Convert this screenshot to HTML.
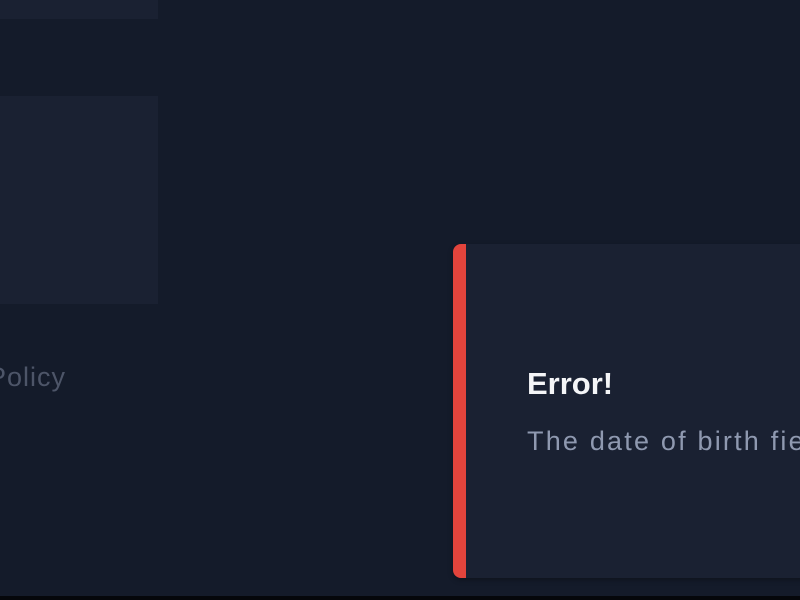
<!DOCTYPE html>
<html><head><style>
html,body{margin:0;padding:0;width:800px;height:600px;overflow:hidden;background:#141b2a;font-family:"Liberation Sans",sans-serif;position:relative}
.p1{position:absolute;left:0;top:0;width:158px;height:19px;background:#1a2132}
.p2{position:absolute;left:0;top:96px;width:158px;height:208px;background:#1a2132}
.pol{position:absolute;left:-12px;top:362px;font-size:27px;color:#4d5568;letter-spacing:1px}
.card{position:absolute;left:453px;top:244px;width:360px;height:334px;background:#1a2132;border-radius:8px;overflow:hidden;box-shadow:0 2px 6px rgba(0,0,0,0.3)}
.bar{position:absolute;left:0;top:0;width:13px;height:100%;background:#e3443c}
.t{position:absolute;left:74px;top:122px;font-size:31px;font-weight:bold;color:#f4f5f7}
.b{position:absolute;left:74px;top:182px;font-size:27px;color:#8f99b0;letter-spacing:2.2px;white-space:nowrap}
.bot{position:absolute;left:0;top:596px;width:800px;height:4px;background:#05070b}
</style></head><body>
<div class="p1"></div><div class="p2"></div>
<div class="pol">Policy</div>
<div class="card"><div class="bar"></div><div class="t">Error!</div><div class="b">The date of birth field</div></div>
<div class="bot"></div>
</body></html>
